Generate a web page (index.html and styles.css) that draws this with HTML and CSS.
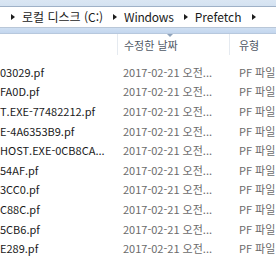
FILE: index.html
```html
<!DOCTYPE html>
<html lang="ko">
<head>
<meta charset="utf-8">
<link rel="stylesheet" href="styles.css">
</head>
<body>
<div class="window">
  <div class="frame-top"></div>
  <div class="address">
    <span class="arrow"></span><span class="crumb">로컬 디스크 (C:)</span>
    <span class="arrow"></span><span class="crumb">Windows</span>
    <span class="arrow"></span><span class="crumb">Prefetch</span>
    <span class="arrow"></span>
  </div>
  <div class="toolbar"></div>
  <div class="header">
    <div class="col name"></div>
    <div class="col date">수정한 날짜<span class="sort"></span></div>
    <div class="col type">유형</div>
  </div>
  <div class="rows">
    <div class="row"><span class="name">03029.pf</span><span class="date">2017-02-21 오전...</span><span class="type">PF 파일</span></div>
    <div class="row"><span class="name">FA0D.pf</span><span class="date">2017-02-21 오전...</span><span class="type">PF 파일</span></div>
    <div class="row"><span class="name">T.EXE-77482212.pf</span><span class="date">2017-02-21 오전...</span><span class="type">PF 파일</span></div>
    <div class="row"><span class="name">E-4A6353B9.pf</span><span class="date">2017-02-21 오전...</span><span class="type">PF 파일</span></div>
    <div class="row"><span class="name">HOST.EXE-0CB8CA...</span><span class="date">2017-02-21 오전...</span><span class="type">PF 파일</span></div>
    <div class="row"><span class="name">54AF.pf</span><span class="date">2017-02-21 오전...</span><span class="type">PF 파일</span></div>
    <div class="row"><span class="name">3CC0.pf</span><span class="date">2017-02-21 오전...</span><span class="type">PF 파일</span></div>
    <div class="row"><span class="name">C88C.pf</span><span class="date">2017-02-21 오전...</span><span class="type">PF 파일</span></div>
    <div class="row"><span class="name">5CB6.pf</span><span class="date">2017-02-21 오전...</span><span class="type">PF 파일</span></div>
    <div class="row"><span class="name">E289.pf</span><span class="date">2017-02-21 오전...</span><span class="type">PF 파일</span></div>
  </div>
</div>
</body>
</html>
```

FILE: styles.css
```css
html, body {
  margin: 0;
  padding: 0;
  background: #ffffff;
}
body {
  width: 276px;
  height: 260px;
  overflow: hidden;
  font-family: "Noto Sans CJK KR", "Noto Sans", sans-serif;
  font-size: 11px;
}
.window {
  display: flex;
  flex-direction: column;
}
.frame-top {
  height: 6px;
  background: linear-gradient(#dae6f3, #d4e2f1);
  border-bottom: 1px solid #9fb1c7;
}
.address {
  height: 20px;
  background: #ffffff;
  border-bottom: 1px solid #b9c7d8;
  display: flex;
  align-items: center;
  padding-left: 11px;
  color: #1a1a1a;
  font-size: 12px;
}
.arrow {
  width: 0;
  height: 0;
  border-top: 3.5px solid transparent;
  border-bottom: 3.5px solid transparent;
  border-left: 4px solid #1c1c1c;
  margin-right: 7px;
}
.crumb {
  margin-right: 10px;
  line-height: 20px;
}
.crumb:nth-of-type(4) {
  letter-spacing: -0.2px;
}
.toolbar {
  height: 5px;
  background: linear-gradient(#cfdff2, #c3d6ee);
  border-bottom: 1px solid #b7c8dd;
}
.header {
  display: flex;
  height: 21px;
  align-items: stretch;
  color: #4f5865;
}
.header .col {
  display: flex;
  align-items: center;
  position: relative;
}
.header .name {
  width: 117px;
  border-right: 1px solid #e5eaf0;
}
.header .date {
  width: 105px;
  padding-left: 6px;
  border-right: 1px solid #e5eaf0;
}
.header .type {
  padding-left: 9px;
}
.sort {
  position: absolute;
  left: 49px;
  top: 0;
  width: 0;
  height: 0;
  border-left: 3px solid transparent;
  border-right: 3px solid transparent;
  border-top: 3px solid #8fa3bb;
}
.rows {
  padding-top: 7px;
}
.row {
  display: flex;
  height: 19.6px;
  align-items: center;
  white-space: nowrap;
}
.row .name {
  width: 123px;
  color: #1a1a1a;
}
.row .date {
  width: 116px;
  color: #6b6b6b;
}
.row .type {
  color: #6b6b6b;
}
```
